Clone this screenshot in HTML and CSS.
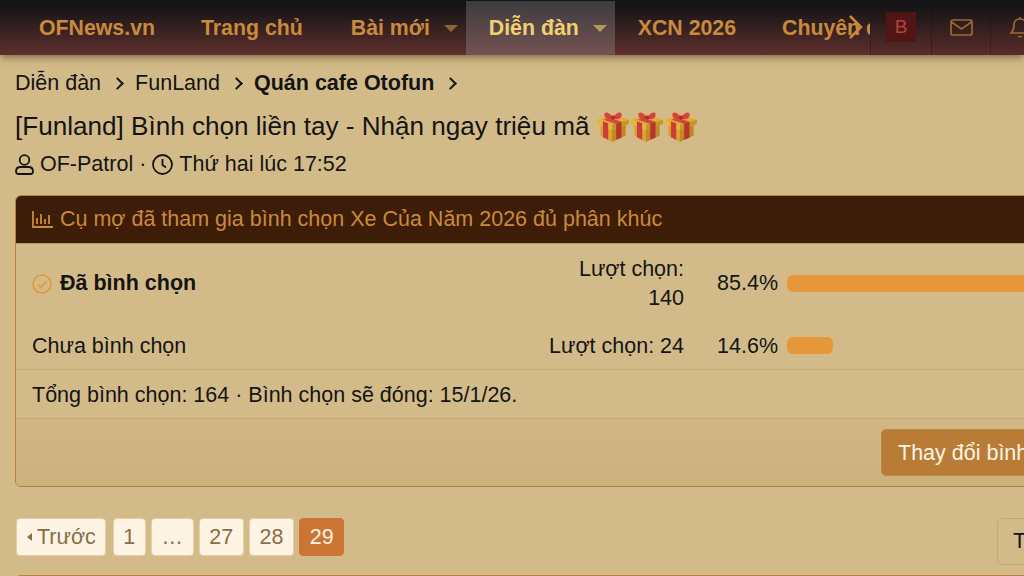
FILE: index.html
```html
<!DOCTYPE html>
<html lang="vi">
<head>
  <meta charset="UTF-8">
  <title>Bình chọn liền tay</title>
  <link rel="stylesheet" href="styles.css">
</head>
<body>
  <svg class="defs" width="0" height="0">
    <symbol id="gift" viewBox="0 0 32 32">
      <path d="M4 12 L15 17 L15 31 L4 25 Z" fill="#dca42e"/>
      <path d="M15 17 L28 12 L28 25 L15 31 Z" fill="#c08a22"/>
      <path d="M1 10 L15 5 L31 10 L31 14 L15 20 L1 14 Z" fill="#e2ae38"/>
      <path d="M1 10 L15 15 L15 20 L1 14 Z" fill="#e6b643"/>
      <path d="M15 15 L31 10 L31 14 L15 20 Z" fill="#c9952a"/>
      <path d="M6.500 11.500 L11.500 13.500 L11.500 29 L6.500 26.500 Z" fill="#cb3f3a"/>
      <path d="M19 13.800 L24 12 L24 27 L19 29 Z" fill="#b9342f"/>
      <path d="M7 10 L19 14 L24 12 L12 8 Z" fill="#cf4a40"/>
      <path d="M16 8 C12 2 7 2 8 6.500 C9 10 13 10 16 9 C19 10 23 10 24 6.500 C25 2 20 2 16 8 Z" fill="#d9433d"/>
      <circle cx="16" cy="8" r="2" fill="#ad2f2a"/>
    </symbol>
  </svg>

  <div class="nav">
    <a class="nav-item">OFNews.vn</a>
    <a class="nav-item">Trang chủ</a>
    <a class="nav-item has-caret nav-new">Bài mới<span class="caret"></span></a>
    <a class="nav-item has-caret active">Diễn đàn<span class="caret"></span></a>
    <a class="nav-item">XCN 2026</a>
    <a class="nav-item">Chuyên đề</a>
    <svg class="nav-more" width="16" height="24" viewBox="0 0 16 24" fill="none" stroke="#c98a3c" stroke-width="2.500">
      <path d="M2 1 L13 12 L2 23"/>
    </svg>
    <div class="nav-user">
      <div class="nav-user-item"><span class="avatar">B</span></div>
      <div class="nav-user-item">
        <svg width="23" height="17" viewBox="0 0 23 17" fill="none" stroke="#9c6a30" stroke-width="1.700">
          <rect x="1" y="1" width="21" height="15" rx="2"/>
          <path d="M1.500 3 L11.500 10 L21.500 3"/>
        </svg>
      </div>
      <div class="nav-user-item">
        <svg width="22" height="22" viewBox="0 0 22 22" fill="none" stroke="#9c6a30" stroke-width="1.700">
          <path d="M2 17 C4 15 5 13 5 9 C5 5.500 7.500 3 11 3 C14.500 3 17 5.500 17 9 C17 13 18 15 20 17 Z"/>
          <path d="M9 20 C10 21 12 21 13 20 M11 1 V3"/>
        </svg>
      </div>
    </div>
  </div>

  <div class="page">
    <div class="breadcrumbs">
      <span>Diễn đàn</span><i class="crumb-sep"></i>
      <span>FunLand</span><i class="crumb-sep"></i>
      <b>Quán cafe Otofun</b><i class="crumb-sep"></i>
    </div>

    <h1 class="title">[Funland] Bình chọn liền tay - Nhận ngay triệu mã
      <span class="gifts">
        <svg width="34" height="34"><use href="#gift"/></svg><svg width="34" height="34"><use href="#gift"/></svg><svg width="34" height="34"><use href="#gift"/></svg>
      </span>
    </h1>

    <div class="meta">
      <svg width="19" height="21" viewBox="0 0 19 21" fill="none" stroke="#141414" stroke-width="1.800">
        <circle cx="9.500" cy="6" r="4.800"/>
        <path d="M1 17.500 C1 14.500 3 13 5.500 13 H13.500 C16 13 18 14.500 18 17.500 C18 19 17 20 15.500 20 H3.500 C2 20 1 19 1 17.500 Z"/>
      </svg>
      <span>OF-Patrol</span>
      <span>·</span>
      <svg width="21" height="21" viewBox="0 0 21 21" fill="none" stroke="#141414" stroke-width="1.800">
        <circle cx="10.500" cy="10.500" r="9.500"/>
        <path d="M10.500 5 V11 L14 13.500"/>
      </svg>
      <span>Thứ hai lúc 17:52</span>
    </div>

    <div class="poll">
      <div class="poll-head">
        <svg width="21" height="17" viewBox="0 0 21 17" fill="none" stroke="#c98a3c" stroke-width="1.800">
          <path d="M1 0 V16 H21 M5 7 V13 M9 3 V13 M13 8 V13 M17 4 V13"/>
        </svg>
        <span>Cụ mợ đã tham gia bình chọn Xe Của Năm 2026 đủ phân khúc</span>
      </div>
      <div class="poll-rows">
        <div class="poll-row tall">
          <div class="poll-answer voted">
            <svg width="20" height="20" viewBox="0 0 20 20" fill="none" stroke="#e5973a" stroke-width="1.500">
              <circle cx="10" cy="10" r="9"/>
              <path d="M6 10.500 L9 13.500 L14.500 7"/>
            </svg>
            <span>Đã bình chọn</span>
          </div>
          <div class="poll-count">Lượt chọn:<br>140</div>
          <div class="poll-pct">85.4%</div>
          <div class="poll-track"><div class="poll-bar"></div></div>
        </div>
        <div class="poll-row">
          <div class="poll-answer">Chưa bình chọn</div>
          <div class="poll-count">Lượt chọn: 24</div>
          <div class="poll-pct">14.6%</div>
          <div class="poll-track"><div class="poll-bar"></div></div>
        </div>
      </div>
      <div class="poll-total">Tổng bình chọn: 164 · Bình chọn sẽ đóng: 15/1/26.</div>
      <div class="poll-foot">
        <button class="btn-primary">Thay đổi bình chọn</button>
      </div>
    </div>

    <div class="page-row">
      <div class="pager">
        <a class="pager-item pager-back"><i class="pager-prev"></i>Trước</a>
        <a class="pager-item">1</a>
        <a class="pager-item">…</a>
        <a class="pager-item">27</a>
        <a class="pager-item">28</a>
        <a class="pager-item current">29</a>
      </div>
      <button class="btn-plain">Trả lời</button>
    </div>

    <div class="next-block"></div>
  </div>
</body>
</html>
```

FILE: styles.css
```css
html, body {
  width: 1024px;
  height: 576px;
  overflow: hidden;
}
body {
  margin: 0;
  font-family: "Liberation Sans", Arial, sans-serif;
  font-size: 21.5px;
  color: #141414;
  background: #d3bb89;
}
.defs {
  display: block;
  height: 0;
}
.nav {
  position: relative;
  z-index: 2;
  display: flex;
  height: 55px;
  padding-left: 16px;
  background: linear-gradient(#141416 10%, #5f2f2d);
  box-shadow: 0 2px 8px rgba(60,40,10,0.6);
  white-space: nowrap;
  overflow: hidden;
}
.nav-item {
  display: flex;
  align-items: center;
  flex: none;
  padding: 1px 23px 0;
  font-size: 21.3px;
  font-weight: 700;
  color: #c98a3c;
}
.nav-item.has-caret {
  padding-right: 8px;
}
.nav-new {
  margin-left: 2px;
}
.nav-item.active {
  margin-top: 1px;
  padding-top: 0;
  color: #f0d070;
  background: linear-gradient(#3c3c3e, #755252);
}
.caret {
  width: 0;
  height: 0;
  margin-left: 14px;
  border-left: 7px solid transparent;
  border-right: 7px solid transparent;
  border-top: 7px solid #8f6535;
}
.active .caret {
  border-top-color: #b39a5c;
}
.nav-more {
  position: absolute;
  left: 848px;
  top: 15px;
}
.nav-user {
  position: absolute;
  left: 870px;
  top: 0;
  display: flex;
  height: 55px;
  background: linear-gradient(#141416 10%, #5a2d2b);
}
.nav-user-item {
  display: flex;
  align-items: center;
  justify-content: center;
  width: 58px;
  padding-bottom: 1px;
  border-left: 1px solid rgba(20,14,14,0.35);
}
.nav-user-item:first-child {
  width: 60px;
}
.avatar {
  width: 30px;
  height: 30px;
  line-height: 30px;
  font-size: 19px;
  text-align: center;
  color: #b5433f;
  background: #4f1615;
}
.page {
  width: 1100px;
  padding-left: 15px;
}
.breadcrumbs {
  display: flex;
  align-items: center;
  height: 53px;
  padding-top: 2px;
}
.crumb-sep {
  width: 7px;
  height: 7px;
  margin: 0 13px 0 12px;
  border-top: 2px solid #141414;
  border-right: 2px solid #141414;
  transform: rotate(45deg);
}
.title {
  display: flex;
  align-items: center;
  gap: 7px;
  margin: 0;
  height: 32px;
  font-size: 26.1px;
  font-weight: 400;
}
.gifts {
  display: flex;
}
.gifts svg {
  display: block;
}
.meta {
  display: flex;
  align-items: center;
  gap: 6px;
  height: 30px;
  margin-top: 7px;
}
.poll {
  width: 1084px;
  margin-top: 16px;
  border: 1px solid #b98039;
  border-radius: 6px;
  overflow: hidden;
}
.poll-head {
  display: flex;
  align-items: center;
  gap: 7px;
  height: 47px;
  padding-left: 16px;
  color: #c98a3c;
  background: #3e1d08;
  border-bottom: 1px solid #bb9a62;
}
.poll-row {
  display: grid;
  grid-template-columns: 470px 198px 103px 1fr;
  align-items: center;
  height: 47px;
}
.poll-row.tall {
  height: 78px;
}
.poll-answer {
  display: flex;
  align-items: center;
  gap: 8px;
  padding: 1px 0 0 16px;
}
.poll-answer.voted {
  font-weight: 700;
}
.poll-count {
  padding-top: 1px;
  line-height: 29px;
  text-align: right;
}
.poll-pct {
  padding: 1px 9px 0 0;
  text-align: right;
}
.poll-track {
  padding-right: 16px;
}
.poll-bar {
  height: 17px;
  width: 46px;
  border-radius: 6px;
  background: #e5973a;
}
.tall .poll-bar {
  width: 100%;
}
.poll-total {
  height: 48px;
  line-height: 50px;
  padding-left: 16px;
  border-top: 1px solid #c6a870;
  border-bottom: 1px solid #c6a870;
}
.poll-foot {
  display: flex;
  height: 67px;
  padding: 10px 0 0 865px;
  box-sizing: border-box;
  background: linear-gradient(#d0b784, #ccb27d);
}
.btn-primary {
  width: 220px;
  height: 47px;
  padding: 2px 0 0 16px;
  font: inherit;
  text-align: left;
  color: #fdf4e6;
  background: #b97c36;
  border: 1px solid #c08a45;
  border-radius: 5px;
}
.page-row {
  display: flex;
  justify-content: space-between;
  margin-top: 31px;
}
.pager {
  display: flex;
  gap: 5.3px;
  margin-left: 1px;
}
.pager-item {
  display: flex;
  align-items: center;
  height: 36px;
  padding: 0 9.5px;
  color: #8a6d42;
  background: #fdf4e6;
  border: 1px solid #e6cfa0;
  border-radius: 4px;
}
.pager-back {
  padding: 0 9px 0 10px;
  margin-right: 1.700px;
}
.pager-prev {
  width: 0;
  height: 0;
  margin-right: 5px;
  border-top: 4px solid transparent;
  border-bottom: 4px solid transparent;
  border-right: 5px solid #8a6d42;
}
.pager-item.current {
  color: #fdf4e6;
  background: #cc7433;
  border-color: #cc7433;
}
.btn-plain {
  width: 118px;
  height: 47px;
  padding: 0 0 0 15px;
  font: inherit;
  text-align: left;
  color: #141414;
  background: #d3bb89;
  border: 1px solid #c9a76b;
  border-radius: 5px;
}
.next-block {
  height: 20px;
  margin-top: 10px;
  border-top: 1px solid #b98039;
  border-radius: 6px 6px 0 0;
}
```
